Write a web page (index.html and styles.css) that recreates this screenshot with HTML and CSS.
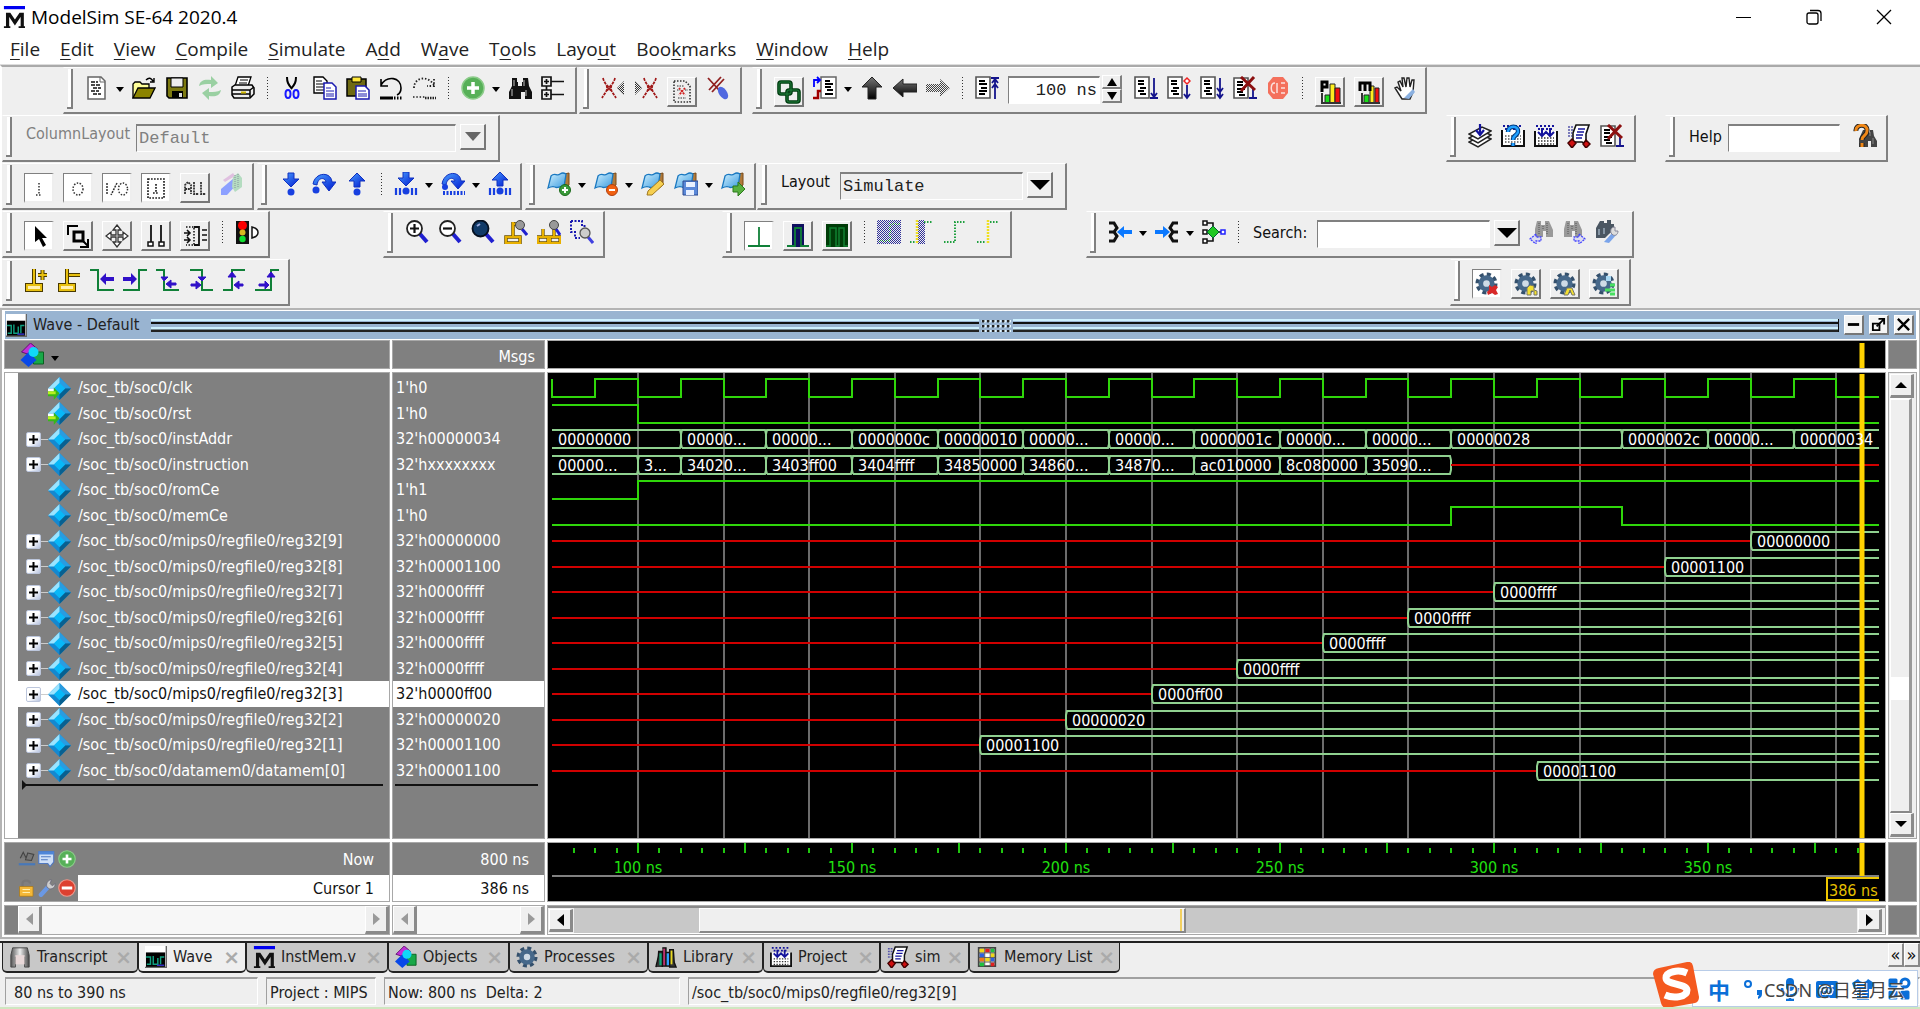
FILE: index.html
```html
<!DOCTYPE html>
<html lang="en">
<head>
<meta charset="utf-8">
<title>ModelSim SE-64 2020.4</title>
<link rel="stylesheet" href="styles.css">
</head>
<body>
<svg class="defs" aria-hidden="true">
<defs>
<pattern id="dots" width="2" height="2" patternUnits="userSpaceOnUse"><rect width="1" height="1" fill="#efefef"/><rect x="1" y="1" width="1" height="1" fill="#efefef"/></pattern>
<linearGradient id="g-blue" x2="1" y2="1"><stop offset="0" stop-color="#4aa0ff"/><stop offset="1" stop-color="#0018d0"/></linearGradient>
<linearGradient id="g-dark" x2="0" y2="1"><stop offset="0" stop-color="#777"/><stop offset="1" stop-color="#000"/></linearGradient>
<linearGradient id="g-book" x2="1" y2="1"><stop offset="0" stop-color="#d4f2ff"/><stop offset="1" stop-color="#3a9be0"/></linearGradient>
<linearGradient id="g-steel" x2="1"><stop offset="0" stop-color="#555"/><stop offset=".5" stop-color="#eee"/><stop offset="1" stop-color="#444"/></linearGradient>
</defs>
<symbol id="new" viewBox="0 0 24 24"><path d="M3 1h13l4 4v18H3z" fill="#fff" stroke="#666" stroke-width="1.5"/><path d="M15 1v5h5" fill="none" stroke="#666"/><path d="M6 6h7M6 9h9M8 12h8M6 15h8M8 18h8" stroke="#111" stroke-width="1.600" stroke-dasharray="4 1"/></symbol>
<symbol id="open" viewBox="0 0 24 24"><path d="M1 22V8l2-2h5l2 2h7v4" fill="#ffff9a" stroke="#000" stroke-width="1.3"/><path d="M1 22 6 12h17l-5 10z" fill="#8c8400" stroke="#000" stroke-width="1.3"/><path d="M14 4c3-3 5-2 7 1m1-3v4h-4" fill="none" stroke="#000" stroke-width="1.4"/></symbol>
<symbol id="save" viewBox="0 0 24 24"><path d="M2 2h20v20H4l-2-2z" fill="#7d7a10" stroke="#000" stroke-width="1.6"/><path d="M6 2h12v9H6z" fill="#eee" stroke="#000"/><path d="M7 15h11v7H7z" fill="#000"/><path d="M14 17h3v4h-3z" fill="#ddd"/></symbol>
<symbol id="reload" viewBox="0 0 24 24"><g fill="#9ad0a2"><path d="M1 10c1-6 6-7 12-6V0l7 7-7 5V8c-5 0-8 0-12 2z"/><path d="M23 14c-1 6-6 7-12 6v4l-7-7 7-5v4c5 0 8 0 12-2z"/></g></symbol>
<symbol id="print" viewBox="0 0 24 24"><path d="M7 1h13l-3 9H4z" fill="#fff" stroke="#000" stroke-width="1.3"/><path d="M9 4h8M8 7h8" stroke="#000"/><path d="m1 11 3-2h17l2 3v6l-4 4H3l-2-3z" fill="#eee" stroke="#000" stroke-width="1.5"/><path d="M1 14h18v7M1 18h18m0-4 4-3" fill="none" stroke="#000" stroke-width="1.5"/><path d="M10 15.500h5v2h-5z" fill="#d0b800"/></symbol>
<symbol id="cut" viewBox="0 0 24 24"><path d="M7 1c0 5 1 7 5 12M16 1c0 5-1 7-5 12" fill="none" stroke="#000" stroke-width="2"/><ellipse cx="8" cy="18" rx="2.500" ry="4" fill="none" stroke="#1818ff" stroke-width="2"/><ellipse cx="16" cy="18" rx="2.500" ry="4" fill="none" stroke="#1818ff" stroke-width="2"/></symbol>
<symbol id="copy" viewBox="0 0 24 24"><path d="M1 1h9l4 4v12H1z" fill="#fff" stroke="#000" stroke-width="1.4"/><path d="M3 5h6M3 8h8M3 11h8M3 14h8" stroke="#000"/><path d="M11 7h8l4 4v12H11z" fill="#fff" stroke="#1a1ab0" stroke-width="1.5"/><path d="M13 12h5M13 15h8M13 18h8M13 20h8" stroke="#1a1ab0"/></symbol>
<symbol id="paste" viewBox="0 0 24 24"><path d="M1 3h19v17H1z" fill="#6f6a12" stroke="#000" stroke-width="1.5"/><path d="M6 1h9v5H6z" fill="#ffe83a" stroke="#000"/><path d="M10 10h9l4 4v9H10z" fill="#fff" stroke="#1a1ab0" stroke-width="1.5"/><path d="M12 15h8M12 18h9M12 20h9" stroke="#1a1ab0"/></symbol>
<symbol id="undo" viewBox="0 0 24 24"><path d="M2 9c6-10 20-8 20 3 0 4-2 6-4 7M2 3v7h7" fill="none" stroke="#000" stroke-width="1.6"/><path d="M1 22h13" stroke="#000" stroke-width="3"/><path d="M15 22h9" stroke="#000" stroke-width="3" stroke-dasharray="1.500 1.500"/></symbol>
<symbol id="redo" viewBox="0 0 24 24"><path d="M22 9C16-1 2 1 2 12M22 3v7h-7" fill="none" stroke="#222" stroke-width="1.8" stroke-dasharray="1.500 1.800"/><path d="M1 21h13" stroke="#222" stroke-width="1.500" stroke-dasharray="1.500 1.800"/><path d="M13 22h11" stroke="#222" stroke-width="2.500" stroke-dasharray="1.500 1"/></symbol>
<symbol id="plus" viewBox="0 0 24 24"><circle cx="12" cy="12" r="11" fill="#57b058" stroke="#8ccc8a" stroke-width="1.500"/><path d="M12 6v12M6 12h12" stroke="#fff" stroke-width="3.500"/></symbol>
<symbol id="minus" viewBox="0 0 24 24"><circle cx="12" cy="12" r="11" fill="#dd4030" stroke="#f0988c" stroke-width="1.500"/><path d="M5 12h14" stroke="#fff" stroke-width="4"/></symbol>
<symbol id="find" viewBox="0 0 24 24"><path d="M4 2h5v4h1v4h4V6h1V2h5l1 8 3 6v7h-7v-7h-4v7H1v-7l3-6z" fill="#111"/><path d="M6 4v6M4 13v7M16 4v6M18 14v6" stroke="#888" stroke-width="1.500"/></symbol>
<symbol id="tree" viewBox="0 0 24 24"><g fill="none" stroke="#111" stroke-width="1.700"><path d="M1 1h9v9H1zM1 14h9v9H1zM10 5.500h13M10 18.500h13M5.500 10v4M5.500 3v5M3 5.500h5M5.500 16v5M3 18.500h5"/></g></symbol>
<symbol id="xl" viewBox="0 0 24 24"><path d="M2 2c1 5 4 6 4 10S3 18 1 22M14 2c-1 5-4 6-4 10s3 6 5 10M6 9l4 6M10 9l-4 6" fill="none" stroke="#a01818" stroke-width="1.700" stroke-dasharray="3 1"/><path d="M23 5v14l-7-7z" fill="#333"/><path d="M23 5v14l-7-7z" fill="url(#dots)"/></symbol>
<symbol id="xr" viewBox="0 0 24 24"><path d="M10 2c1 5 4 6 4 10s-3 6-5 10M22 2c-1 5-4 6-4 10s3 6 5 10M14 9l4 6M18 9l-4 6" fill="none" stroke="#a01818" stroke-width="1.700" stroke-dasharray="3 1"/><path d="M1 5v14l7-7z" fill="#333"/><path d="M1 5v14l7-7z" fill="url(#dots)"/></symbol>
<symbol id="xdoc" viewBox="0 0 24 24"><path d="M4 1h11l5 5v16H4z" fill="#eee" stroke="#333" stroke-width="1.600" stroke-dasharray="1.500 1.500"/><path d="M7 6h7M8 18h8M7 10h3M15 10h3" stroke="#333" stroke-dasharray="1.500 1"/><path d="m9 8 6 7m0-7-6 7" stroke="#d02020" stroke-width="1.800" stroke-dasharray="2 1"/></symbol>
<symbol id="xpen" viewBox="0 0 24 24"><path d="m2 2 11 12M15 1 3 14M18 3 6 16" stroke="#902020" stroke-width="1.800"/><ellipse cx="17" cy="17" rx="4" ry="7" transform="rotate(-35 17 17)" fill="#5068e0"/></symbol>
<symbol id="link" viewBox="0 0 24 24"><g fill="none" stroke="#003c10" stroke-width="3.600"><rect x="2" y="2" width="12" height="12" rx="2"/><rect x="10" y="10" width="12" height="12" rx="2"/></g><g fill="none" stroke="#20803c"><rect x="2" y="2" width="12" height="12" rx="2"/><rect x="10" y="10" width="12" height="12" rx="2"/></g></symbol>
<symbol id="restart" viewBox="0 0 24 24"><path d="M8 1h15v21H8z" fill="#fff" stroke="#666" stroke-width="1.500"/><path d="M12 5h5M12 8h8M12 11h6M14 14h6M12 18h8" stroke="#000" stroke-width="1.800"/><path d="M1 11V4h5M4 1l3 3-3 3" fill="none" stroke="#00f" stroke-width="1.800"/><path d="M0 22h5v-7h3" fill="none" stroke="#a00000" stroke-width="2.500"/></symbol>
<symbol id="up" viewBox="0 0 24 24"><path d="m12 1 10 10h-6v12H8V11H2z" fill="url(#g-dark)" stroke="#222"/></symbol>
<symbol id="left" viewBox="0 0 24 24"><path d="M0 12 10 3v5h14v8H10v5z" fill="url(#g-dark)" stroke="#222"/></symbol>
<symbol id="right" viewBox="0 0 24 24"><path d="M24 12 14 3v5H0v8h14v5z" fill="#444"/><rect width="24" height="24" fill="url(#dots)"/></symbol>
<symbol id="runup" viewBox="0 0 24 24"><path d="M1 1h14v21H1z" fill="#fff" stroke="#555" stroke-width="1.600"/><path d="M4 5h6M4 8h8M6 12h6M4 15h8M4 18h6" stroke="#000" stroke-width="1.800"/><path d="M20 23V2M16 2h8M17 7l3-4 3 4M17 12l3-4 3 4" fill="none" stroke="#14148c" stroke-width="1.800"/></symbol>
<symbol id="run1" viewBox="0 0 24 24"><path d="M1 1h14v21H1z" fill="#fff" stroke="#555" stroke-width="1.600"/><path d="M4 5h6M4 8h6M6 12h6M4 15h6M6 18h6" stroke="#000" stroke-width="1.800"/><path d="M20 2v20M16 22h8M17 17l3 4 3-4" fill="none" stroke="#14148c" stroke-width="1.800"/></symbol>
<symbol id="run2" viewBox="0 0 24 24"><path d="M1 1h14v21H1z" fill="#fff" stroke="#555" stroke-width="1.600"/><path d="M4 5h6M4 8h6M6 12h6M4 15h6M6 18h6" stroke="#000" stroke-width="1.800"/><path d="M20 9v13M17 18l3 4 3-4" fill="none" stroke="#14148c" stroke-width="1.800"/><path d="m20 2 3 3-3 3-3-3z" fill="#fff" stroke="#e22" stroke-width="1.500"/></symbol>
<symbol id="run3" viewBox="0 0 24 24"><path d="M1 1h14v21H1z" fill="#fff" stroke="#555" stroke-width="1.600"/><path d="M4 5h6M4 8h6M6 12h6M4 15h6M6 18h6" stroke="#000" stroke-width="1.800"/><path d="M20 2v20M17 18l3 4 3-4M17 12l3 4 3-4" fill="none" stroke="#14148c" stroke-width="1.800"/></symbol>
<symbol id="runx" viewBox="0 0 24 24"><path d="M1 2h14v20H1z" fill="#fff" stroke="#555" stroke-width="1.600"/><path d="M4 6h6M4 9h6M4 13h8M4 16h6M6 19h6" stroke="#000" stroke-width="1.800"/><path d="M20 12v10M16 22h8" stroke="#14148c" stroke-width="1.800"/><path d="m8 1 14 13M21 1 8 15" stroke="#8c1010" stroke-width="3"/></symbol>
<symbol id="stop" viewBox="0 0 24 24"><path d="M7 1h10l5 6v10l-5 6H7l-5-6V7z" fill="#f4705c"/><path d="M9 7c-5 0-5 10 0 10M11 7v10M15 12h4M15 7h4M15 17h4" stroke="#fbe0dc" stroke-width="1.500" fill="none"/></symbol>
<symbol id="perfp" viewBox="0 0 24 24"><path d="M4 12V2h5v5H4" fill="none" stroke="#000" stroke-width="3"/><path d="M7 15h5v8H7z" fill="#18e018" stroke="#222"/><path d="M12 4h5v19h-5z" fill="#ffee20" stroke="#222"/><path d="M17 8h5v15h-5z" fill="#f01010" stroke="#222"/><path d="M4 13v10h19" fill="none" stroke="#333" stroke-width="2"/></symbol>
<symbol id="perfm" viewBox="0 0 24 24"><path d="M7 15h5v8H7z" fill="#18e018" stroke="#222"/><path d="M13 6h4v17h-4z" fill="#ffee20" stroke="#222"/><path d="M18 8h4v15h-4z" fill="#f01010" stroke="#222"/><path d="M3 11V3h10v8M8 3v8" fill="none" stroke="#000" stroke-width="3"/><path d="M5 13v10h18" fill="none" stroke="#333" stroke-width="2"/></symbol>
<symbol id="hand" viewBox="0 0 24 24"><path d="m2 12 2-1 4 4-3-9 2-1 3 6-1-9h2l2 9 1-9h2l1 9 2-7h2l-1 12-3 7H9z" fill="#fff" stroke="#222" stroke-width="1.400"/><path d="m11 22 9-9 2 3-6 7z" fill="#8ab0e0"/></symbol>
<symbol id="comp" viewBox="0 0 24 24"><g fill="#fff" stroke="#222" stroke-width="1.500"><path d="m1 18 9 5 13-8-9-4z"/><path d="m1 14 9 5 13-8-9-4z"/><path d="m1 10 9 5 13-8-9-4z"/></g><path d="M12 0v10M8 6l4 5 4-5" fill="none" stroke="#14149c" stroke-width="2.200"/></symbol>
<symbol id="calq" viewBox="0 0 24 24"><path d="M1 6v16h22V6" fill="#fff" stroke="#111" stroke-width="2"/><path d="M4 12h16M4 15h16M4 18h16" stroke="#555" stroke-width="1.500" stroke-dasharray="1.500 1.500"/><path d="M2 2h20M4 5h16" stroke="#14149c" stroke-width="2" stroke-dasharray="2 2"/><path d="M7 8c0-7 11-7 10 0-1 4-5 3-5 8M12 19v3" fill="none" stroke="#003c80" stroke-width="4.500"/><path d="M7 8c0-7 11-7 10 0-1 4-5 3-5 8M12 19v3" fill="none" stroke="#22a0ff" stroke-width="2.500"/></symbol>
<symbol id="cal" viewBox="0 0 24 24"><path d="M1 7v15h22V7" fill="#fff" stroke="#111" stroke-width="2"/><path d="M4 14h16M4 17h16M4 20h16" stroke="#333" stroke-width="1.500" stroke-dasharray="1.500 1.500"/><path d="M2 2h20M4 5h16" stroke="#14149c" stroke-width="2" stroke-dasharray="2 2"/><path d="M8 4v7M16 4v7M4 8l4 4 4-4 4 4 4-4" fill="none" stroke="#14149c" stroke-width="2"/></symbol>
<symbol id="sim" viewBox="0 0 24 24"><path d="M9 1h13l-3 9v10l-4-2H6V9z" fill="#fff" stroke="#111" stroke-width="1.600"/><path d="M11 5h7M10 8h7M9 11h7M9 14h6" stroke="#14149c" stroke-width="1.500"/><path d="M1 3h6M1 6h5M1 9h4M1 12h4" stroke="#55a" stroke-width="1.400" stroke-dasharray="2 1"/><path d="m5 15 4 4-4 5-4-5zM19 16l4 4-4 4-3-4z" fill="#d01010" stroke="#400" stroke-width="1.500"/></symbol>
<symbol id="helpf" viewBox="0 0 24 24"><path d="M10 6h5v3h2V6h3l1 6 3 5v6h-6v-6h-3v6H6v-8z" fill="#444"/><path d="M17 8v4M20 14v6" stroke="#888"/><path d="M3 7c-1-7 12-8 11 0 0 5-5 4-5 9M9 19v4" fill="none" stroke="#222" stroke-width="5"/><path d="M3 7c-1-7 12-8 11 0 0 5-5 4-5 9M9 19v4" fill="none" stroke="#f08818" stroke-width="3"/></symbol>
<symbol id="fi" viewBox="0 0 24 24"><path d="M12 7v12M9 19h6" stroke="#333" stroke-width="1.500" stroke-dasharray="1.500 1.500"/></symbol>
<symbol id="fo" viewBox="0 0 24 24"><ellipse cx="12" cy="13" rx="5" ry="6" fill="none" stroke="#333" stroke-width="1.500" stroke-dasharray="1.500 1.500"/></symbol>
<symbol id="fio" viewBox="0 0 24 24"><path d="M2 7v12M12 7 6 19" stroke="#333" stroke-width="1.500" stroke-dasharray="2 1"/><ellipse cx="18" cy="13" rx="4.500" ry="6" fill="none" stroke="#333" stroke-width="1.500" stroke-dasharray="1.500 1.500"/></symbol>
<symbol id="fint" viewBox="0 0 24 24"><path d="M4 3h16v19H4zM12 8v9M9 17h6" fill="none" stroke="#222" stroke-width="1.700" stroke-dasharray="1.700 1.300"/></symbol>
<symbol id="fall" viewBox="0 0 24 24"><path d="M2 18V9l3-3 3 3v9M2 13h6M11 6v12h5M18 6v12h5" fill="none" stroke="#333" stroke-width="1.800" stroke-dasharray="2 .8"/></symbol>
<symbol id="wand" viewBox="0 0 24 24"><path d="M4 8 14 1l2 3L6 10z" fill="#e0c0e0"/><path d="M2 17 15 6l5 4L8 23H2z" fill="#8ca0ff"/><path d="m14 5 5-4 4 5v9l-7 5-3-5z" fill="#b4dcc0"/><path d="M16 3v14M19 2v14" stroke="#8890a0" stroke-dasharray="1 1"/></symbol>
<symbol id="into" viewBox="0 0 24 24"><path d="M9 1h6v6h5l-8 8-8-8h5z" fill="url(#g-blue)" stroke="#1030c0"/><circle cx="12" cy="20" r="3.500" fill="#1840e0"/></symbol>
<symbol id="over" viewBox="0 0 24 24"><path d="M1 12C3 0 19-1 20 10h4l-7 9-7-9h4c-1-5-8-5-9 3z" fill="url(#g-blue)" stroke="#1030c0"/><circle cx="4" cy="18" r="3.500" fill="#1840e0"/></symbol>
<symbol id="out" viewBox="0 0 24 24"><path d="m12 1 8 8h-5v6H9V9H4z" fill="url(#g-blue)" stroke="#1030c0"/><circle cx="12" cy="20" r="3.500" fill="#1840e0"/></symbol>
<symbol id="intoc" viewBox="0 0 24 24"><path d="M9 0h6v6h5l-8 8-8-8h5z" fill="url(#g-blue)" stroke="#1030c0"/><circle cx="12" cy="19" r="3.500" fill="#1840e0"/><path d="M2 16v7M6 16v7M18 16v7M22 16v7" stroke="#1840e0" stroke-width="2.200"/></symbol>
<symbol id="overc" viewBox="0 0 24 24"><path d="M1 12C3-1 19-2 20 9h4l-7 8-7-8h4c-1-4-8-4-9 4z" fill="url(#g-blue)" stroke="#1030c0"/><circle cx="4" cy="15" r="3" fill="#1840e0"/><path d="M2 21h22" stroke="#1840e0" stroke-width="4" stroke-dasharray="2 1.500"/></symbol>
<symbol id="outc" viewBox="0 0 24 24"><path d="m12 0 8 8h-5v6H9V8H4z" fill="url(#g-blue)" stroke="#1030c0"/><circle cx="12" cy="19" r="3.500" fill="#1840e0"/><path d="M2 16v7M6 16v7M18 16v7M22 16v7" stroke="#1840e0" stroke-width="2.200"/></symbol>
<symbol id="book" viewBox="0 0 24 24"><path d="m17 2 5-1v12l-5 4z" fill="#b07a3a" stroke="#7a4a18"/><path d="M4 4c4-4 6 1 9-2 3-2 4-1 6 0l-2 13c-4-2-6 2-9 0-2-1-5 0-7 1z" fill="url(#g-book)" stroke="#1a78c0" stroke-width="1.300"/></symbol>
<symbol id="bkadd" viewBox="0 0 24 24"><use href="#book" width="24" height="24"/><circle cx="18" cy="18" r="5.500" fill="#3a9a3a" stroke="#1a6a1a"/><path d="M18 15v6M15 18h6" stroke="#fff" stroke-width="2"/></symbol>
<symbol id="bkdel" viewBox="0 0 24 24"><use href="#book" width="24" height="24"/><circle cx="18" cy="18" r="5.500" fill="#f06010" stroke="#b04010"/><path d="M15 18h6" stroke="#fff" stroke-width="2"/></symbol>
<symbol id="bkedit" viewBox="0 0 24 24"><use href="#book" width="24" height="24"/><path d="m7 19 12-11 4 4-12 11H6z" fill="#f6cf50" stroke="#a07820"/></symbol>
<symbol id="bksave" viewBox="0 0 24 24"><use href="#book" width="24" height="24"/><path d="M9 9h15v14H9z" fill="#5a88d8" stroke="#2a4890"/><path d="M12 10h9v5h-9zM12 18h8v5h-8z" fill="#e8f0ff"/></symbol>
<symbol id="bkgo" viewBox="0 0 24 24"><use href="#book" width="24" height="24"/><path d="M12 14h5v-4l7 7-7 7v-4h-5z" fill="#58b040" stroke="#2a7a1a"/></symbol>
<symbol id="arrow" viewBox="0 0 24 24"><path d="M8 2v16l4-3 4 8 3-2-4-7h5z" fill="#000"/></symbol>
<symbol id="zoomm" viewBox="0 0 24 24"><path d="M2 11V2h10" fill="none" stroke="#000" stroke-width="2"/><path d="M8 8h9v9H8z" fill="none" stroke="#000" stroke-width="3"/><path d="m16 16 6 6M22 15v8h-8" fill="none" stroke="#000" stroke-width="2"/></symbol>
<symbol id="pan" viewBox="0 0 24 24"><path d="m12 1 4 5h-3v5h5V8l5 4-5 4v-3h-5v5h3l-4 5-4-5h3v-5H6v3l-5-4 5-4v3h5V6H8z" fill="#fff" stroke="#333" stroke-width="1.300"/></symbol>
<symbol id="curs2" viewBox="0 0 24 24"><path d="M7 1v17M17 1v17" stroke="#111" stroke-width="1.800"/><path d="M4 18h5v4H4zM15 18h5v4h-5z" fill="#fff" stroke="#111" stroke-width="1.500"/></symbol>
<symbol id="edge" viewBox="0 0 24 24"><path d="M11 3h5v18h-5" fill="none" stroke="#111" stroke-width="1.800"/><path d="M3 3h8v18H3" fill="none" stroke="#111" stroke-dasharray="1.500 1.500" stroke-width="1.500"/><path d="M1 9h6M4 6l3 3-3 3M1 16h6M4 13l3 3-3 3M24 6h-5M24 11h-5M24 16h-5" fill="none" stroke="#111" stroke-width="1.600"/></symbol>
<symbol id="light" viewBox="0 0 24 24"><path d="M1 1h13v23H1z" fill="#111"/><circle cx="7.500" cy="5.500" r="4.500" fill="#f00"/><circle cx="7.500" cy="12.500" r="3" fill="#d8b820"/><circle cx="7.500" cy="19" r="3.200" fill="#10e030"/><path d="M17 7c8 2 8 9 0 11z" fill="#fff" stroke="#111" stroke-width="1.500"/></symbol>
<symbol id="zin" viewBox="0 0 24 24"><path d="m15 14 7 8" stroke="#2020d0" stroke-width="4"/><circle cx="9.500" cy="8.500" r="7.500" fill="#fff" stroke="#222" stroke-width="1.800"/><path d="M5 8.500h9M9.500 4v9" stroke="#111" stroke-width="2.200"/></symbol>
<symbol id="zout" viewBox="0 0 24 24"><path d="m15 14 7 8" stroke="#2020d0" stroke-width="4"/><circle cx="9.500" cy="8.500" r="7.500" fill="#fff" stroke="#222" stroke-width="1.800"/><path d="M5 8.500h9" stroke="#111" stroke-width="2.200"/></symbol>
<symbol id="zfull" viewBox="0 0 24 24"><path d="m15 14 7 8" stroke="#2020d0" stroke-width="4"/><circle cx="9.500" cy="8.500" r="8" fill="#103a68" stroke="#051020" stroke-width="1.800"/><path d="M6 6l3-2" stroke="#9ad" stroke-width="2"/></symbol>
<symbol id="zcur" viewBox="0 0 24 24"><path d="M9 2v15M2 17h14v6H2zM9 4h5" fill="none" stroke="#6a5000" stroke-width="3.500"/><path d="M9 2v15M2 17h14v6H2zM9 4h5" fill="none" stroke="#e8b000" stroke-width="2.200"/><path d="m18 9 5 6" stroke="#2020d0" stroke-width="3"/><circle cx="16" cy="5" r="4.500" fill="#999" stroke="#444"/></symbol>
<symbol id="zcur2" viewBox="0 0 24 24"><path d="M6 9v9M1 17h10v6H1zM17 8v9M13 17h10v6H13z" fill="none" stroke="#6a5000" stroke-width="3.300"/><path d="M6 9v9M1 17h10v6H1zM17 8v9M13 17h10v6H13z" fill="none" stroke="#e8b000" stroke-width="2"/><path d="m19 9 4 6" stroke="#2020d0" stroke-width="3"/><circle cx="17" cy="5" r="4.500" fill="#999" stroke="#444"/></symbol>
<symbol id="zsel" viewBox="0 0 24 24"><path d="M1 1h11v5h4M1 1v11h4v6h5" fill="none" stroke="#1818b0" stroke-width="2" stroke-dasharray="2 1.500"/><path d="m18 17 5 6" stroke="#4040e0" stroke-width="3"/><circle cx="15" cy="13" r="5" fill="#ccc" stroke="#555" stroke-width="1.300"/></symbol>
<symbol id="w1" viewBox="0 0 24 24"><path d="M12 3v19M1 22h22" stroke="#108038" stroke-width="1.800"/></symbol>
<symbol id="w2" viewBox="0 0 24 24"><path d="M6 0h12v23H6z" fill="#101060"/><path d="M1 22h8V4h6v18h8" fill="none" stroke="#108038" stroke-width="1.800"/></symbol>
<symbol id="w3" viewBox="0 0 24 24"><path d="M1 0h22v23H1z" fill="#003c08"/><path d="M1 22h4V4h6v18h3V4h5v18h4" fill="none" stroke="#108030" stroke-width="1.500"/></symbol>
<symbol id="w4" viewBox="0 0 24 24"><path d="M0 0h24v24H0z" fill="#303098"/><path d="M2 21h11V4h10" fill="none" stroke="#108038" stroke-width="2" stroke-dasharray="2 1"/><rect width="24" height="24" fill="url(#dots)"/></symbol>
<symbol id="w5" viewBox="0 0 24 24"><path d="M8 0h7v24H8z" fill="#303098"/><rect width="24" height="24" fill="url(#dots)"/><path d="M7 0v24" stroke="#f0e020" stroke-width="2.500" stroke-dasharray="2 1"/><path d="M0 22h6M14 2h9" stroke="#20a040" stroke-width="2" stroke-dasharray="1.500 1.500"/></symbol>
<symbol id="w6" viewBox="0 0 24 24"><path d="M1 22h11V2h11" fill="none" stroke="#20a040" stroke-width="2" stroke-dasharray="1.500 1.500"/></symbol>
<symbol id="w7" viewBox="0 0 24 24"><path d="M1 22h9M14 2h9" stroke="#20a040" stroke-width="2" stroke-dasharray="1.500 1.500"/><path d="M12 0v24" stroke="#f0e020" stroke-width="2.500" stroke-dasharray="2 1"/></symbol>
<symbol id="brl" viewBox="0 0 24 24"><path d="M1 3h5l3 5-3 4H1M6 12l3 4-3 5H1" fill="none" stroke="#111" stroke-width="3"/><path d="m9 12 7-6v4h8v4h-8v4z" fill="#0a78ff"/></symbol>
<symbol id="brr" viewBox="0 0 24 24"><path d="M23 3h-5l-3 5 3 4h5M18 12l-3 4 3 5h5" fill="none" stroke="#111" stroke-width="3"/><path d="M15 12 8 6v4H0v4h8v4z" fill="#0a78ff"/></symbol>
<symbol id="net" viewBox="0 0 24 24"><path d="M3 3h8v18H3M1 12h20" fill="none" stroke="#111" stroke-width="1.600"/><path d="M1 1h4v4H1zM1 10h4v4H1zM1 19h4v4H1z" fill="#fff" stroke="#111" stroke-width="1.500"/><path d="m11 6 6 6-6 6-6-6z" fill="#20c820" stroke="#063"/><path d="M19 10h4v4h-4z" fill="#fff" stroke="#22f" stroke-width="1.500"/></symbol>
<symbol id="sprev" viewBox="0 0 24 24"><path d="M8 1h4v4h4V1h4l4 9v7h-7v-6h-3v6H6V9z" fill="#999"/><path d="M10 3v12M18 3v12M14 6v4" stroke="#555" stroke-dasharray="1 1"/><path d="m7 14-6 5 6 5v-3h5v-4H7z" fill="#dde" stroke="#44f" stroke-width="1.300" stroke-dasharray="2 1"/></symbol>
<symbol id="snext" viewBox="0 0 24 24"><path d="M4 1h4v4h4V1h4l4 9v7h-7v-6h-3v6H2V9z" fill="#999"/><path d="M6 3v12M14 3v12M10 6v4" stroke="#555" stroke-dasharray="1 1"/><path d="m17 14 6 5-6 5v-3h-5v-4h5z" fill="#dde" stroke="#44f" stroke-width="1.300" stroke-dasharray="2 1"/></symbol>
<symbol id="sopt" viewBox="0 0 24 24"><path d="M5 1h4v2h3V0h4v4h3v6l-5 4-4 4H1V8z" fill="#4a5662"/><path d="M4 9v6M9 8v6" stroke="#9ab" stroke-width="1.500"/><path d="m9 22 9-10 4 2-8 9z" fill="#7aa4ea"/><path d="M16 13c-1-4 1-6 4-6v4h3c0 4-3 5-5 4z" fill="#ddd" stroke="#889"/></symbol>
<symbol id="cadd" viewBox="0 0 24 24"><path d="M10 1v16M3 17h14v5H3zM14 7h9M18.500 2v10" fill="none" stroke="#4a3a00" stroke-width="4"/><path d="M10 1v16M3 17h14v5H3zM14 7h9M18.500 2v10" fill="#fff0b0" stroke="#e8c010" stroke-width="2"/></symbol>
<symbol id="cdel" viewBox="0 0 24 24"><path d="M10 1v16M3 17h14v5H3zM12 7h11" fill="none" stroke="#4a3a00" stroke-width="4"/><path d="M10 1v16M3 17h14v5H3zM12 7h11" fill="#fff0b0" stroke="#e8c010" stroke-width="2"/></symbol>
<symbol id="e1" viewBox="0 0 24 24"><path d="M0 2h8v20h16" fill="none" stroke="#108038" stroke-width="2"/><path d="m10 11 6-6v4h8v4h-8v4z" fill="#3010c8"/></symbol>
<symbol id="e2" viewBox="0 0 24 24"><path d="M0 22h16V2h8" fill="none" stroke="#108038" stroke-width="2"/><path d="M14 11 8 5v4H0v4h8v4z" fill="#3010c8"/></symbol>
<symbol id="e3" viewBox="0 0 24 24"><path d="M0 2h8v20h15" fill="none" stroke="#108038" stroke-width="2"/><path d="m5 9 3 4 4-4zM10 16l5-4v8zM14 15h6v2h-6z" fill="#3010c8" stroke="#3010c8"/></symbol>
<symbol id="e4" viewBox="0 0 24 24"><path d="M1 2h12v20h11" fill="none" stroke="#108038" stroke-width="2"/><path d="m9 9 4 4 4-4zM12 17l-5-4v8zM2 16h5v2H2z" fill="#3010c8" stroke="#3010c8"/></symbol>
<symbol id="e5" viewBox="0 0 24 24"><path d="M1 22h9V2h13" fill="none" stroke="#108038" stroke-width="2"/><path d="m6 9 4-5 4 5zM12 17l5-4v8zM15 16h6v2h-6z" fill="#3010c8" stroke="#3010c8"/></symbol>
<symbol id="e6" viewBox="0 0 24 24"><path d="M0 22h16V2h8" fill="none" stroke="#108038" stroke-width="2"/><path d="m12 9 4-5 4 5zM14 17l-4-4v8zM4 16h6v2H4z" fill="#3010c8" stroke="#3010c8"/></symbol>
<symbol id="gear" viewBox="0 0 24 24"><circle cx="12" cy="12" r="9.500" fill="none" stroke="#34506c" stroke-width="4" stroke-dasharray="4.200 3.260"/><circle cx="12" cy="12" r="6" fill="#cfdbe6" stroke="#46688a" stroke-width="5"/></symbol>
<symbol id="g1" viewBox="0 0 24 24"><use href="#gear" width="23" height="23"/><path d="m14 13 3 2 3-2 3 2-2 3 2 4-3 1-3-2-4 2-1-3 2-2z" fill="#d82828"/></symbol>
<symbol id="g2" viewBox="0 0 24 24"><use href="#gear" width="23" height="23"/><path d="M13 23v-7l3-3 4 1v4l3 1v4h-3v-4h-3v4z" fill="#f4e030" stroke="#776"/></symbol>
<symbol id="g3" viewBox="0 0 24 24"><use href="#gear" width="23" height="23"/><path d="m11 23 3-7h5l3 7h-3l-2-5-2 5z" fill="#f4e030" stroke="#776"/></symbol>
<symbol id="g4" viewBox="0 0 24 24"><use href="#gear" width="23" height="23"/><path d="M14 4h5v5h-5z" fill="#a8d8f4"/><path d="M18 13h5M13 18h10M18 22h5" stroke="#48e060" stroke-width="3"/></symbol>
<symbol id="wavei" viewBox="0 0 24 24"><path d="M0 0h24v24H0z" fill="#fff"/><path d="M1 7h21v16H1z" fill="#000"/><path d="M1 12h5v8H2M9 11v9h5v-7M17 20v-8h4" fill="none" stroke="#10a080" stroke-width="1.600"/><path d="M13 21h8" stroke="#33c" stroke-width="1.500"/><path d="M0 23.500h23.500V0" fill="none" stroke="#666" stroke-width="2"/></symbol>
<symbol id="mlogo" viewBox="0 0 24 24"><path d="M1 0h23v3.500H1z" fill="#0000f0"/><path d="M5 23V9h2l6 9 6-9h2v14" fill="none" stroke="#111" stroke-width="3.500"/><path d="M1 23h7M17 23h7" stroke="#111" stroke-width="2"/></symbol>
<symbol id="objs" viewBox="0 0 24 24"><path d="m1 9 9-9 7 6-7 6z" fill="#c030d8" stroke="#601070"/><path d="M13 9h10v12H13z" fill="#18a848" stroke="#0a6020"/><path d="m8 9 8 8-8 7-8-7z" fill="#0848e8"/><circle cx="13" cy="9" r="5" fill="#10d8f8"/></symbol>
<symbol id="trans" viewBox="0 0 24 24"><path d="M2 23V10l2-8h16l2 8v13h-5V12H7v11z" fill="url(#g-steel)" stroke="#444"/><path d="M7 10h10v10H7z" fill="#e8d8d8"/></symbol>
<symbol id="lib" viewBox="0 0 24 24"><path d="M1 23c1-7 3-8 3-17h4v17M8 2h4v20H8M12 7h4v15h-4M16 4h4l1 14 2 5h-7z" fill="#333" stroke="#111" stroke-width="1.500"/><path d="M6 8v13" stroke="#10a878" stroke-width="2.500"/><path d="M10 3v18" stroke="#c03070" stroke-width="2"/><path d="M14 8v13" stroke="#30a0ff" stroke-width="2.500"/><path d="M18 5v15" stroke="#e8d820" stroke-width="2"/></symbol>
<symbol id="mem" viewBox="0 0 24 24"><path d="M3 2h18v20H3z" fill="#fff" stroke="#444" stroke-width="2"/><path d="M4 3h5v4H4zM16 8h4v4h-4zM10 13h5v4h-5z" fill="#f0d818"/><path d="M10 3h5v4h-5zM16 18h4v4h-4z" fill="#e02020"/><path d="M16 3h4v4h-4zM4 18h5v4H4z" fill="#20c040"/><path d="M4 8h5v4H4zM16 13h4v4h-4z" fill="#3060e0"/><path d="M4 13h5v4H4z" fill="#f07818"/><path d="M3 7.500h18M3 12.500h18M3 17.500h18M9.500 2v20M15.500 2v20" stroke="#555"/></symbol>
<symbol id="gem" viewBox="0 0 24 24"><path d="m12 0 12 12-12 12L0 12z" fill="#1488d0"/><path d="m12 0 12 12h-7l-5-5z" fill="#2a9ce0"/><path d="M12 0 0 12h7l5-5z" fill="#9ae4ff"/><path d="M24 12 12 24v-7l5-5z" fill="#086090"/><path d="m12 6 6 6-6 6-6-6z" fill="#08b8f8"/></symbol>
<symbol id="gemin" viewBox="0 0 24 24"><use href="#gem" width="24" height="24"/><path d="M0 14h6v-3l6 6-6 7v-4H0z" fill="#38b818"/><path d="M0 12h6v3H0z" fill="#fff"/><path d="M0 15h8v3H0z" fill="#b8f020"/></symbol>
<symbol id="camera" viewBox="0 0 24 24"><path d="m3 11 4-8 4 8M13 4l8 2-3 8-8-1z" fill="#777" stroke="#444" stroke-width="1.500"/><path d="M1 19h22" stroke="#4878b8" stroke-width="3"/></symbol>
<symbol id="note" viewBox="0 0 24 24"><path d="M1 2h20v14l-5 6-3-4H1z" fill="#cfe0f8" stroke="#5078c0" stroke-width="1.500"/><path d="M1 2h20v4H1z" fill="#4f86d8"/><path d="M4 9h13M4 13h9" stroke="#5078c0" stroke-width="1.500"/></symbol>
<symbol id="lock" viewBox="0 0 24 24"><path d="M6 11V6c0-5 10-5 10 0" fill="none" stroke="#777" stroke-width="3"/><path d="M2 10h18v13H2z" fill="#f4b838" stroke="#a87818"/><path d="M6 14h10M6 18h10" stroke="#fff0b0" stroke-width="1.500"/></symbol>
<symbol id="wrench" viewBox="0 0 24 24"><path d="m4 21 10-11" stroke="#6a98e4" stroke-width="6" stroke-linecap="round"/><path d="M12 11c-2-6 2-10 6-10l-2 5 3 3 4-3c0 6-5 8-8 7z" fill="#ccc" stroke="#667"/></symbol>
</svg>

<header class="titlebar">
  <svg class="applogo"><use href="#mlogo"/></svg>
  <h1>ModelSim SE-64 2020.4</h1>
  <div class="winctl">
    <button aria-label="Minimize"><svg viewBox="0 0 16 16"><path d="M0 8.500h15" stroke="#000"/></svg></button>
    <button aria-label="Restore"><svg viewBox="0 0 16 16"><g fill="none" stroke="#000" stroke-width="1.300"><rect x="1" y="4" width="11" height="11" rx="2"/><path d="M4 1.500h8c2 0 3 1 3 3V12"/></g></svg></button>
    <button aria-label="Close"><svg viewBox="0 0 16 16"><path d="m1 1 14 14M15 1 1 15" stroke="#000" stroke-width="1.300"/></svg></button>
  </div>
</header>
<nav class="menubar">
  <button><u>F</u>ile</button><button><u>E</u>dit</button><button><u>V</u>iew</button><button><u>C</u>ompile</button><button><u>S</u>imulate</button><button>A<u>d</u>d</button><button>W<u>a</u>ve</button><button>T<u>o</u>ols</button><button>Layo<u>u</u>t</button><button>Boo<u>k</u>marks</button><button><u>W</u>indow</button><button><u>H</u>elp</button>
</nav>

<section class="toolbars" aria-label="Toolbars">
  <div class="row row1">
    <div class="tb c2">
      <button class="ic" aria-label="New"><svg><use href="#new"/></svg></button><button class="dd" aria-label="New menu"></button>
      <button class="ic" aria-label="Open"><svg><use href="#open"/></svg></button>
      <button class="ic" aria-label="Save"><svg><use href="#save"/></svg></button>
      <button class="ic" aria-label="Reload"><svg><use href="#reload"/></svg></button>
      <button class="ic" aria-label="Print"><svg><use href="#print"/></svg></button><i class="sep"></i>
      <button class="ic" aria-label="Cut"><svg><use href="#cut"/></svg></button>
      <button class="ic" aria-label="Copy"><svg><use href="#copy"/></svg></button>
      <button class="ic" aria-label="Paste"><svg><use href="#paste"/></svg></button>
      <button class="ic" aria-label="Undo"><svg><use href="#undo"/></svg></button>
      <button class="ic" aria-label="Redo"><svg><use href="#redo"/></svg></button><i class="sep"></i>
      <button class="ic" aria-label="Add"><svg><use href="#plus"/></svg></button><button class="dd" aria-label="Add menu"></button>
      <button class="ic" aria-label="Find"><svg><use href="#find"/></svg></button>
      <button class="ic" aria-label="Collapse"><svg><use href="#tree"/></svg></button>
    </div>
    <div class="tb c4">
      <button class="ic" aria-label="Previous exclusion"><svg><use href="#xl"/></svg></button>
      <button class="ic" aria-label="Next exclusion"><svg><use href="#xr"/></svg></button>
      <button class="bt" aria-label="Exclusion report"><svg><use href="#xdoc"/></svg></button>
      <button class="ic" aria-label="Edit exclusion"><svg><use href="#xpen"/></svg></button>
    </div>
    <div class="tb c6">
      <button class="bt" aria-label="Link"><svg><use href="#link"/></svg></button>
      <button class="ic" aria-label="Restart"><svg><use href="#restart"/></svg></button><button class="dd" aria-label="Restart menu"></button>
      <button class="ic" aria-label="Up"><svg><use href="#up"/></svg></button>
      <button class="ic" aria-label="Back"><svg><use href="#left"/></svg></button>
      <button class="ic" aria-label="Forward"><svg><use href="#right"/></svg></button><i class="sep"></i>
      <button class="ic" aria-label="Restart simulation"><svg><use href="#runup"/></svg></button>
      <input class="field runlen" aria-label="Run length" value="100 ns">
      <span class="spin"><button aria-label="Increase"></button><button aria-label="Decrease"></button></span>
      <button class="ic" aria-label="Run"><svg><use href="#run1"/></svg></button>
      <button class="ic" aria-label="Continue run"><svg><use href="#run2"/></svg></button>
      <button class="ic" aria-label="Run all"><svg><use href="#run3"/></svg></button>
      <button class="ic" aria-label="Break"><svg><use href="#runx"/></svg></button>
      <button class="ic" aria-label="Stop"><svg><use href="#stop"/></svg></button><i class="sep"></i>
      <button class="bt" aria-label="Performance"><svg><use href="#perfp"/></svg></button>
      <button class="bt" aria-label="Memory"><svg><use href="#perfm"/></svg></button>
      <button class="ic" aria-label="Edit mode"><svg><use href="#hand"/></svg></button>
    </div>
  </div>
  <div class="row row2">
    <div class="tb c2">
      <label class="lb off" for="collayout">ColumnLayout</label>
      <input class="field flat grow off" id="collayout" value="Default" disabled>
      <button class="drop dim" aria-label="Open column layouts"></button>
    </div>
    <div class="tb c4">
      <button class="ic" aria-label="Compile"><svg><use href="#comp"/></svg></button>
      <button class="ic" aria-label="Compile out of date"><svg><use href="#calq"/></svg></button>
      <button class="ic" aria-label="Compile all"><svg><use href="#cal"/></svg></button>
      <button class="ic" aria-label="Simulate"><svg><use href="#sim"/></svg></button>
      <button class="ic" aria-label="Break"><svg><use href="#runx"/></svg></button>
    </div>
    <div class="tb c6">
      <label class="lb mid" for="help">Help</label>
      <input class="field grow" id="help">
      <button class="ic tail" aria-label="Search help"><svg><use href="#helpf"/></svg></button>
    </div>
  </div>
  <div class="row row3">
    <div class="tb c2">
      <button class="bt on" aria-label="Inputs"><svg><use href="#fi"/></svg></button>
      <button class="bt on" aria-label="Outputs"><svg><use href="#fo"/></svg></button>
      <button class="bt on" aria-label="Inouts"><svg><use href="#fio"/></svg></button>
      <button class="bt on" aria-label="Internals"><svg><use href="#fint"/></svg></button>
      <button class="bt" aria-label="All"><svg><use href="#fall"/></svg></button>
      <button class="ic" aria-label="Filter"><svg><use href="#wand"/></svg></button>
    </div>
    <div class="tb c4">
      <button class="ic" aria-label="Step into"><svg><use href="#into"/></svg></button>
      <button class="ic" aria-label="Step over"><svg><use href="#over"/></svg></button>
      <button class="ic" aria-label="Step out"><svg><use href="#out"/></svg></button><i class="sep"></i>
      <button class="ic" aria-label="Step into current"><svg><use href="#intoc"/></svg></button><button class="dd" aria-label="Step into menu"></button>
      <button class="ic" aria-label="Step over current"><svg><use href="#overc"/></svg></button><button class="dd" aria-label="Step over menu"></button>
      <button class="ic" aria-label="Step out current"><svg><use href="#outc"/></svg></button>
    </div>
    <div class="tb c6">
      <button class="ic" aria-label="Add bookmark"><svg><use href="#bkadd"/></svg></button><button class="dd" aria-label="Add bookmark menu"></button>
      <button class="ic" aria-label="Delete bookmark"><svg><use href="#bkdel"/></svg></button><button class="dd" aria-label="Delete bookmark menu"></button>
      <button class="ic" aria-label="Manage bookmarks"><svg><use href="#bkedit"/></svg></button>
      <button class="ic" aria-label="Save bookmarks"><svg><use href="#bksave"/></svg></button><button class="dd" aria-label="Save bookmarks menu"></button>
      <button class="ic" aria-label="Go to bookmark"><svg><use href="#bkgo"/></svg></button>
    </div>
    <div class="tb c8">
      <label class="lb wide-gap" for="layout">Layout</label>
      <input class="field flat grow" id="layout" value="Simulate">
      <button class="drop" aria-label="Open layouts"></button>
    </div>
  </div>
  <div class="row row4">
    <div class="tb c2">
      <button class="bt on" aria-label="Select mode"><svg><use href="#arrow"/></svg></button>
      <button class="bt" aria-label="Zoom mode"><svg><use href="#zoomm"/></svg></button>
      <button class="bt" aria-label="Pan mode"><svg><use href="#pan"/></svg></button>
      <button class="bt" aria-label="Two cursor mode"><svg><use href="#curs2"/></svg></button>
      <button class="bt" aria-label="Edit mode"><svg><use href="#edge"/></svg></button><i class="sep"></i>
      <button class="ic" aria-label="Stop drawing"><svg><use href="#light"/></svg></button>
    </div>
    <div class="tb c4">
      <button class="ic" aria-label="Zoom in"><svg><use href="#zin"/></svg></button>
      <button class="ic" aria-label="Zoom out"><svg><use href="#zout"/></svg></button>
      <button class="ic" aria-label="Zoom full"><svg><use href="#zfull"/></svg></button>
      <button class="ic" aria-label="Zoom on cursor"><svg><use href="#zcur"/></svg></button>
      <button class="ic" aria-label="Zoom between cursors"><svg><use href="#zcur2"/></svg></button>
      <button class="ic" aria-label="Zoom selection"><svg><use href="#zsel"/></svg></button>
    </div>
    <div class="tb c6">
      <button class="bt on" aria-label="Event mode"><svg><use href="#w1"/></svg></button>
      <button class="bt" aria-label="Delta mode"><svg><use href="#w2"/></svg></button>
      <button class="bt" aria-label="Expanded mode"><svg><use href="#w3"/></svg></button><i class="sep"></i>
      <button class="ic" aria-label="Expand all"><svg><use href="#w4"/></svg></button>
      <button class="ic" aria-label="Expand at cursor"><svg><use href="#w5"/></svg></button>
      <button class="ic" aria-label="Collapse all"><svg><use href="#w6"/></svg></button>
      <button class="ic" aria-label="Collapse at cursor"><svg><use href="#w7"/></svg></button>
    </div>
    <div class="tb c8 searchbar">
      <button class="ic" aria-label="Drivers"><svg><use href="#brl"/></svg></button><button class="dd" aria-label="Drivers menu"></button>
      <button class="ic" aria-label="Readers"><svg><use href="#brr"/></svg></button><button class="dd" aria-label="Readers menu"></button>
      <button class="ic" aria-label="Connectivity"><svg><use href="#net"/></svg></button><i class="sep"></i>
      <label class="lb mid wide-gap" for="search">Search:</label>
      <input class="field grow" id="search">
      <button class="drop" aria-label="Search history"></button>
      <button class="ic" aria-label="Search previous"><svg><use href="#sprev"/></svg></button>
      <button class="ic" aria-label="Search next"><svg><use href="#snext"/></svg></button>
      <button class="ic" aria-label="Search options"><svg><use href="#sopt"/></svg></button>
    </div>
  </div>
  <div class="row row5">
    <div class="tb c2">
      <button class="ic" aria-label="Insert cursor"><svg><use href="#cadd"/></svg></button>
      <button class="ic" aria-label="Delete cursor"><svg><use href="#cdel"/></svg></button>
      <button class="ic" aria-label="Previous transition"><svg><use href="#e1"/></svg></button>
      <button class="ic" aria-label="Next transition"><svg><use href="#e2"/></svg></button>
      <button class="ic" aria-label="Previous falling edge"><svg><use href="#e3"/></svg></button>
      <button class="ic" aria-label="Next falling edge"><svg><use href="#e4"/></svg></button>
      <button class="ic" aria-label="Previous rising edge"><svg><use href="#e5"/></svg></button>
      <button class="ic" aria-label="Next rising edge"><svg><use href="#e6"/></svg></button>
    </div>
    <div class="tb c4">
      <button class="bt on" aria-label="Processes off"><svg><use href="#g1"/></svg></button>
      <button class="bt" aria-label="Processes in region"><svg><use href="#g2"/></svg></button>
      <button class="bt" aria-label="Active processes"><svg><use href="#g3"/></svg></button>
      <button class="bt" aria-label="Process hierarchy"><svg><use href="#g4"/></svg></button>
    </div>
  </div>
</section>

<main class="pane">
  <div class="panehead">
    <svg class="pi" viewBox="0 0 24 24" preserveAspectRatio="none"><use href="#wavei"/></svg>
    <h2>Wave - Default</h2>
    <span class="grip first"></span><span class="knurl"></span><span class="grip last"></span>
    <button class="pb" aria-label="Minimize pane"><svg viewBox="0 0 16 16"><path d="M2 8h12" stroke="#000" stroke-width="3"/></svg></button>
    <button class="pb" aria-label="Undock pane"><svg viewBox="0 0 16 16"><path d="M2 7h7v7H2z" fill="none" stroke="#000" stroke-width="2"/><path d="m6 10 7-7M8 2h6v6" fill="none" stroke="#000" stroke-width="2"/></svg></button>
    <button class="pb" aria-label="Close pane"><svg viewBox="0 0 16 16"><path d="m2 2 12 12M14 2 2 14" stroke="#000" stroke-width="2.500"/></svg></button>
  </div>
  <div class="wave">
    <div class="cell gray h-name"><svg><use href="#objs"/></svg><button class="dd" aria-label="Signal menu"></button></div>
    <div class="cell gray h-msgs">Msgs</div>
    <div class="cell black"><svg class="plot" id="plot-head"></svg></div>
    <div class="cell gray"></div>

    <div class="cell gray names"><ul class="list" id="names"></ul><div class="endline"></div></div>
    <div class="cell gray msgs"><ul class="list" id="msgs"></ul><div class="endline"></div></div>
    <div class="cell black"><svg class="plot" id="plot" role="img" aria-label="Waveforms"></svg></div>
    <div class="cell vbar"><button class="sb up" aria-label="Scroll up"></button><div class="vthumb"><i></i></div><button class="sb down" aria-label="Scroll down"></button></div>

    <div class="cell gray cursors">
      <div class="crow now"><svg><use href="#camera"/></svg><svg><use href="#note"/></svg><svg><use href="#plus"/></svg><span>Now</span></div>
      <div class="crow"><svg><use href="#lock"/></svg><svg><use href="#wrench"/></svg><svg><use href="#minus"/></svg><span class="sel">Cursor 1</span></div>
    </div>
    <div class="cell gray cursors">
      <div class="crow now"><span>800 ns</span></div>
      <div class="crow"><span class="sel">386 ns</span></div>
    </div>
    <div class="cell black"><svg class="plot" id="ruler" role="img" aria-label="Time axis"></svg></div>
    <div class="cell gray"></div>

    <div class="cell hbar inset"><button class="sb lt dis" aria-label="Scroll names left"></button><i class="track"></i><button class="sb rt dis" aria-label="Scroll names right"></button></div>
    <div class="cell hbar"><button class="sb lt dis" aria-label="Scroll values left"></button><i class="track"></i><button class="sb rt dis" aria-label="Scroll values right"></button></div>
    <div class="cell hbar wide"><button class="sb lt" aria-label="Scroll left"></button><div class="trough"><i class="hthumb"></i></div><button class="sb rt" aria-label="Scroll right"></button></div>
    <div class="cell gray"></div>
  </div>
</main>

<nav class="tabs">
  <button class="tab t1"><svg><use href="#trans"/></svg><span>Transcript</span><b>×</b></button>
  <button class="tab t2 active"><svg><use href="#wavei"/></svg><span>Wave</span><b>×</b></button>
  <button class="tab t3"><svg><use href="#mlogo"/></svg><span>InstMem.v</span><b>×</b></button>
  <button class="tab t4"><svg><use href="#objs"/></svg><span>Objects</span><b>×</b></button>
  <button class="tab t5"><svg><use href="#gear"/></svg><span>Processes</span><b>×</b></button>
  <button class="tab t6"><svg><use href="#lib"/></svg><span>Library</span><b>×</b></button>
  <button class="tab t7"><svg><use href="#cal"/></svg><span>Project</span><b>×</b></button>
  <button class="tab t8"><svg><use href="#sim"/></svg><span>sim</span><b>×</b></button>
  <button class="tab t9"><svg><use href="#mem"/></svg><span>Memory List</span><b>×</b></button>
  <i class="fill"></i>
  <button class="ts" aria-label="Previous tab">«</button><button class="ts" aria-label="Next tab">»</button>
</nav>
<footer class="status">
  <span>80 ns to 390 ns</span><span>Project : MIPS</span><span>Now: 800 ns&nbsp; Delta: 2</span><span>/soc_tb/soc0/mips0/regfile0/reg32[9]</span>
</footer>

<aside class="ime">
  <svg class="slogo" viewBox="0 0 46 46"><path d="M6 6 34 0q5-1 6 4l6 31q0 5-4 6l-28 5q-5 0-6-5L0 12q0-5 6-6z" fill="#f4591f"/><path d="M34 11c-9-4-21-1-21 5 0 7 20 5 21 12 0 7-13 9-22 5" fill="none" stroke="#fff" stroke-width="7"/></svg>
  <span class="zh">中</span>
  <svg viewBox="0 0 24 24"><circle cx="6" cy="7" r="3" fill="none" stroke="#0b6fd8" stroke-width="2"/><path d="M15 13h5v4c0 3-2 4-4 5v-2l1-2h-2z" fill="#0b6fd8"/></svg>
  <svg viewBox="0 0 24 24"><rect x="8" y="1" width="8" height="13" rx="4" fill="#0b6fd8"/><path d="M4 11c0 10 16 10 16 0M12 18v5M8 23h8" fill="none" stroke="#0b6fd8" stroke-width="2.500"/></svg>
  <svg viewBox="0 0 24 24"><rect x="1" y="4" width="22" height="17" rx="2" fill="#0b6fd8"/><path d="M4 9h16M4 13h16M7 17h10" stroke="#fff" stroke-width="2" stroke-dasharray="2.500 1.500"/></svg>
  <svg viewBox="0 0 24 24"><path d="m1 6 6-4c2 4 8 4 10 0l6 4-2 6h-3v11H6V12H3z" fill="#0b6fd8"/></svg>
  <svg viewBox="0 0 24 24"><path d="M3 3h6v6H3zM15 15h6v6h-6zM3 15h6v6H3z" fill="#0b6fd8" stroke="#0b6fd8" stroke-linejoin="round" stroke-width="3"/><circle cx="18" cy="6" r="4" fill="none" stroke="#0b6fd8" stroke-width="3"/></svg>
  <span class="mark">CSDN @日星月云</span>
</aside>
<script src="app.js"></script>
</body>
</html>
```
FILE: styles.css
```css
* { box-sizing: border-box; }
html, body { margin: 0; }
body {
  display: flex; flex-direction: column; min-height: 100vh; position: relative;
  background: #efefef; color: #111; overflow-x: hidden;
  font: 16px/20px "DejaVu Sans Condensed", "Noto Sans", sans-serif;
  border-bottom: 2px solid #cfe6c0;
}
button, input { font: inherit; color: inherit; padding: 0; margin: 0; border: 0; background: none; border-radius: 0; }
.defs { position: absolute; width: 0; height: 0; }
ul { list-style: none; margin: 0; padding: 0; }
h1, h2 { margin: 0; font-weight: 400; }

.titlebar { display: flex; align-items: center; height: 35px; background: #fff; padding: 0 1px 2px 3px; }
.applogo { width: 22px; height: 22px; margin-right: 6px; }
h1 { font: 19px/24px "Open Sans", "Noto Sans", sans-serif; color: #000; }
.winctl { margin-left: auto; display: flex; }
.winctl button { width: 70px; height: 32px; display: grid; place-items: center; }
.winctl svg { width: 16px; height: 16px; }
.menubar { display: flex; gap: 20px; height: 30px; background: #fff; padding-left: 10px; font: 19px/28px "Open Sans", "Noto Sans", sans-serif; border-bottom: 1px solid #ddd; }
.menubar button { color: #222; height: 28px; }
.menubar u { text-decoration-thickness: 1px; text-underline-offset: 3px; }

.toolbars { border-top: 2px solid #aaa; border-left: 2px solid #fff; display: grid; grid-auto-rows: 47px; row-gap: 1px; padding-bottom: 1px; }
.row { display: grid; }
.row1 { grid-template-columns: 61px 514px 2px 163px 10px 675px 1fr; }
.row2 { grid-template-columns: 0 498px 1fr 190px 29px 223px 32px; }
.row3 { grid-template-columns: 0 252px 3px 265px 3px 231px 1px 310px 1fr; }
.row4 { grid-template-columns: 0 268px 113px 222px 117px 290px 74px 548px 1fr; }
.row5 { grid-template-columns: 0 288px 1160px 181px 1fr; }
.c2 { grid-column: 2; } .c4 { grid-column: 4; } .c6 { grid-column: 6; } .c8 { grid-column: 8; }
.tb {
  display: flex; align-items: flex-start; padding: 5px 0 0 9px; min-width: 0;
  border: solid; border-width: 1px 2px 2px 1px; border-color: #fff #808080 #808080 #efefef;
}
.tb::before { content: ""; flex: none; width: 7px; height: 40px; margin: -4px 6px 0 -6px; background: linear-gradient(#808080, #808080) 4px 0 / 2px 40px no-repeat, linear-gradient(#808080, #808080) 0 38px / 5px 2px no-repeat, linear-gradient(#fff, #fff) 1px 0 / 3px 40px no-repeat; }
.searchbar { padding-right: 9px; }
.ic { flex: none; width: 33px; height: 30px; display: grid; place-items: center; }
.ic svg, .bt svg { width: 24px; height: 24px; }
.bt { flex: none; width: 30px; height: 30px; margin: 4px 4px 0 5px; display: grid; place-items: center; border: solid; border-width: 1px 2px 2px 1px; border-color: #fff #777 #777 #fff; }
.bt.on { background: #fff; border-color: #808080 #eee #eee #808080; }
.dd { flex: none; width: 14px; height: 32px; display: grid; place-items: center; }
.dd::before { content: ""; border: solid transparent; border-width: 5px 4px 0; border-top-color: #000; }
.sep { flex: none; width: 16px; height: 24px; margin-top: 4px; background: repeating-linear-gradient(#333 0 1px, transparent 1px 3px) 8px 0 / 1px 24px no-repeat; }
.field { height: 28px; margin-top: 3px; padding: 0 2px; background: #fff; border: 1px solid; border-color: #808080 #fff #fff #808080; border-top-width: 2px; min-width: 0; font: 17px/24px "Liberation Mono", monospace; color: #222; }
.field.flat { background: #efefef; }
.grow { flex: 1; }
.runlen { width: 92px; text-align: right; margin-left: 5px; }
.spin { display: grid; width: 20px; height: 28px; margin: 2px 7px 0 2px; }
.spin button { display: grid; place-items: center; border: solid; border-width: 1px 2px 2px 1px; border-color: #fff #808080 #808080 #fff; }
.spin button::before { content: ""; border: solid transparent; border-width: 0 5px 8px; border-bottom-color: #000; }
.spin button + button::before { border-width: 8px 5px 0; border-top-color: #000; }
.lb { padding: 3px 6px 0 7px; color: #111; }
.lb.mid { padding-top: 6px; }
.lb.wide-gap { padding-right: 10px; }
.lb.off, .field.off { color: #808080; }
.drop { flex: none; width: 26px; height: 26px; margin: 3px 4px 0; display: grid; place-items: center; border: solid; border-width: 1px 2px 2px 1px; border-color: #fff #777 #777 #fff; }
.row2 .drop, .row3 .drop { margin-right: 12px; }
.drop::before { content: ""; border: solid transparent; border-width: 10px 10px 0; border-top-color: #000; }
.drop.dim::before { border-top-color: #666; border-width: 9px 8px 0; }
.tail { margin: 0 5px 0 8px; }

.pane { flex: 1; display: flex; flex-direction: column; margin-top: 1px; padding: 1px 3px 3px 3px; border: 2px solid #b4b4b4; border-right-width: 1px; background: #fff; }
.panehead { display: flex; align-items: center; height: 28px; background: #99b4d1; padding: 0 2px 0 1px; }
.pi { width: 21px; height: 23px; }
h2 { font: inherit; margin: 0 12px 0 6px; color: #222; }
.grip { height: 13px; background: linear-gradient(#cdf0ff 0 2px, #99b4d1 2px 3px, #111 3px 5px, #99b4d1 5px 8px, #cdf0ff 8px 10px, #222 11px 13px); }
.grip.first { flex: 486; }
.grip.last { flex: 484; border-right: 1px solid #111; }
.knurl { width: 30px; margin: 0 2px; height: 13px; background: radial-gradient(circle at 1px 1px, #222 1px, transparent 2px) 1px 1px / 5px 5px, radial-gradient(circle at 1px 1px, #e4f6ff 1px, transparent 2px) 3px 1px / 5px 5px; }
.pb { width: 20px; height: 20px; margin-left: 5px; display: grid; place-items: center; background: #f4f4f4; border: solid; border-width: 1px 2px 2px 1px; border-color: #fff #777 #777 #fff; }
.pb svg { width: 15px; height: 15px; }

.wave { flex: 1; display: grid; gap: 5px 4px; margin-top: 2px; background: #fff; grid-template-columns: 384px 151px minmax(0, 1fr) 27px; grid-template-rows: 27px minmax(440px, 1fr) 58px 28px; }
.cell { min-width: 0; outline: 1px solid #a8a8a8; }
.gray { background: #808080; color: #fff; }
.black { background: #000; }
.plot { display: block; width: 100%; height: 100%; overflow: hidden; }
.h-name { display: flex; align-items: center; padding-left: 15px; }
.h-name svg { width: 25px; height: 24px; }
.h-name .dd { width: 20px; height: 12px; margin-top: 8px; }
.h-msgs { text-align: right; padding: 6px 9px 0 0; }
.names { border-left: 13px solid #fff; }
.names, .msgs { padding-top: 2px; }
.list { display: grid; grid-template-rows: repeat(16, 1fr); height: 408px; }
.list li { display: flex; align-items: center; min-width: 0; white-space: nowrap; padding-top: 1px; }
#names li { padding-left: 8px; }
#msgs li { padding-left: 3px; }
.list li.sel { background: #fff; color: #111; }
.exp { width: 15px; height: 15px; display: grid; place-items: center; background: linear-gradient(135deg, #fff 50%, #b8c4e0); border: 1px solid #bcc6dc; border-radius: 2px; }
.exp svg { width: 9px; height: 9px; }
.stem { width: 7px; height: 1px; background: #ccc; }
.none { width: 22px; }
.gem { width: 23px; height: 23px; margin-right: 7px; }
.endline { height: 2px; background: #111; margin: 1px 6px 0 2px; }
.names .endline { margin-left: 4px; position: relative; }
.names .endline::before { content: ""; position: absolute; left: 0; top: -4px; border: solid transparent; border-width: 5px 0 5px 5px; border-left-color: #111; }

.cursors { display: flex; flex-direction: column; }
.crow { display: flex; align-items: center; height: 26px; padding-left: 13px; }
.crow.now { height: 32px; }
.crow svg { width: 18px; height: 18px; margin-right: 2px; }
.crow span { flex: 1; height: 100%; text-align: right; padding: 7px 15px 0 0; }
.crow.now + .crow span { padding-top: 4px; }
.cursors:not(:has(svg)) .crow { padding-left: 0; }
.crow .sel { background: #fff; color: #111; }

.hbar { display: flex; background: #f7f7f7; }
.hbar.inset { border-left: 13px solid #808080; }
.track, .trough { flex: 1; }
.wide { background: #efefef; border-top: 2px solid #888; border-bottom: 1px solid #fff; }
.wide .sb { margin: 1px; }
.wide .rt { margin-right: 3px; }
.trough { background: #c8c8c8; display: flex; }
.hthumb { width: 487px; margin-left: 125px; background: linear-gradient(#f2d060, #f2d060) right 2px top / 2px 100% no-repeat #efefef; border: solid; border-width: 1px 2px 2px 1px; border-color: #fff #888 #888 #fff; }
.sb { flex: none; width: 24px; background: #efefef; display: grid; place-items: center; border: solid; border-width: 1px 3px 3px 1px; border-color: #fff #8a8a8a #8a8a8a #fff; }
.sb::before { content: ""; border: 5px solid transparent; }
.lt::before { border-width: 6px 7px 6px 0; border-right-color: #000; }
.rt::before { border-width: 6px 0 6px 7px; border-left-color: #000; }
.lt.dis::before { border-right-color: #999; }
.rt.dis::before { border-left-color: #999; }
.vbar { display: flex; flex-direction: column; background: #efefef; padding: 1px 2px 1px 1px; }
.vbar .sb { height: 24px; }
.up::before { border-width: 0 6px 6px; border-bottom-color: #000; }
.down::before { border-width: 6px 6px 0; border-top-color: #000; }
.vthumb { flex: 1; width: 22px; border: solid; border-width: 2px 3px 2px 1px; border-color: #fff #999 #888 #fff; display: flex; align-items: flex-end; padding-bottom: 111px; }
.vthumb i { flex: 1; height: 23px; background: #fff; }

.tabs { display: flex; align-items: flex-start; height: 36px; margin-top: 2px; border-top: 2px solid #222; padding-left: 2px; }
.tab { display: flex; align-items: center; height: 30px; background: #c8c8c8; border: solid #222; border-width: 0 1px 2px; border-radius: 0 0 5px 5px; padding-left: 6px; gap: 6px; color: #222; white-space: nowrap; }
.tab.active { background: #efefef; }
.tab svg { width: 22px; height: 22px; flex: none; }
.tab b { margin-left: auto; margin-right: 5px; font: bold 20px/20px "DejaVu Sans", sans-serif; color: #aaa; }
.t1 { width: 136px; } .t2 { width: 108px; } .t3 { width: 142px; } .t4 { width: 121px; } .t5 { width: 139px; }
.t6 { width: 115px; } .t7 { width: 117px; } .t8 { width: 89px; } .t9 { width: 151px; }
.fill { flex: 1; }
.ts { width: 16px; height: 24px; font-size: 18px; border: solid; border-width: 1px 2px 2px 1px; border-color: #fff #888 #888 #fff; }

.status { display: grid; grid-template-columns: 253px 110px 296px 1fr; column-gap: 8px; height: 28px; margin-bottom: 2px; padding-left: 5px; }
.status span { border: 1px solid; border-color: #a0a0a0 #fff #fff #a0a0a0; border-top-width: 2px; padding: 4px 0 0 3px; white-space: nowrap; color: #222; }
.status span:first-child { padding-left: 8px; }

.ime { position: absolute; right: 2px; bottom: 0; width: 226px; height: 37px; display: flex; align-items: center; justify-content: space-between; padding: 0 6px 0 15px; background: #fff; border: 1px solid #b8cce8; }
.ime svg { width: 24px; height: 24px; }
.ime .slogo { position: absolute; left: -40px; bottom: -2px; width: 46px; height: 46px; }
.zh { font: bold 22px/24px "Noto Sans CJK SC", sans-serif; color: #0b6fd8; }
.mark { position: absolute; right: 12px; top: 7px; font: 18px/24px "Noto Sans", "Noto Sans CJK SC", sans-serif; color: #444; white-space: nowrap; text-shadow: 1px 1px 0 #fff; }

.g { stroke: #6c6c6c; stroke-width: 2; }
.sig { fill: none; stroke: #2fd60a; stroke-width: 2; }
.bus { fill: none; stroke: #8fd08f; stroke-width: 2; }
.unk { fill: none; stroke: #d00000; stroke-width: 2; }
.cur { stroke: #ffd200; stroke-width: 5; }
.val { fill: #fff; font-size: 16px; }
.tick { stroke: #20c810; stroke-width: 2; }
.tl { fill: #20e010; font-size: 16px; text-anchor: middle; }
.axis { stroke: #808080; stroke-width: 2; }
.flag { fill: #000; stroke: #f0c800; stroke-width: 2; }
.ft { fill: #e8c000; font-size: 16px; }
```
FILE: app.js
```js
// Each signal: name, current value, and its changes as [time, value]; null is an unknown bus.
const reg = (n, t, v) => ({ name: `/soc_tb/soc0/mips0/regfile0/reg32[${n}]`, msg: "32'h" + v, bus: [[80, null], [t, v]] });
const signals = [
  { name: "/soc_tb/soc0/clk", msg: "1'h0", input: true, bit: [[80, 1], ...Array.from({ length: 31 }, (_, i) => [80 + i * 10, i % 2])] },
  { name: "/soc_tb/soc0/rst", msg: "1'h0", input: true, bit: [[80, 1], [100, 0]] },
  { name: "/soc_tb/soc0/instAddr", msg: "32'h00000034", bus: [[80, "00000000"], [110, "00000..."], [130, "00000..."], [150, "0000000c"], [170, "00000010"], [190, "00000..."], [210, "00000..."], [230, "0000001c"], [250, "00000..."], [270, "00000..."], [290, "00000028"], [330, "0000002c"], [350, "00000..."], [370, "00000034"]] },
  { name: "/soc_tb/soc0/instruction", msg: "32'hxxxxxxxx", bus: [[80, "00000..."], [100, "3..."], [110, "34020..."], [130, "3403ff00"], [150, "3404ffff"], [170, "34850000"], [190, "34860..."], [210, "34870..."], [230, "ac010000"], [250, "8c080000"], [270, "35090..."], [290, null]] },
  { name: "/soc_tb/soc0/romCe", msg: "1'h1", bit: [[80, 0], [100, 1]] },
  { name: "/soc_tb/soc0/memCe", msg: "1'h0", bit: [[80, 0], [290, 1], [330, 0]] },
  reg(9, 360, "00000000"), reg(8, 340, "00001100"), reg(7, 300, "0000ffff"), reg(6, 280, "0000ffff"),
  reg(5, 260, "0000ffff"), reg(4, 240, "0000ffff"), { ...reg(3, 220, "0000ff00"), sel: true },
  reg(2, 200, "00000020"), reg(1, 180, "00001100"),
  { name: "/soc_tb/soc0/datamem0/datamem[0]", msg: "32'h00001100", bus: [[80, null], [310, "00001100"]] }
];
const X = t => Math.round(90 + (t - 100) * 4.28);
const END = 1331;
const CURSOR = X(386);
const text = (x, y, cls, s) => `<text x="${x}" y="${y}" class="${cls}">${s}</text>`;
const path = (cls, d) => `<path class="${cls}" d="${d}"/>`;

document.getElementById("names").innerHTML = signals.map(s => {
  const lead = s.bus ? '<button class="exp" aria-label="Expand"><svg viewBox="0 0 9 9"><path d="M4.500 0v9M0 4.500h9" stroke="#000" stroke-width="2"/></svg></button><i class="stem"></i>' : '<i class="none"></i>';
  return `<li class="${s.sel ? "sel" : ""}">${lead}<svg class="gem"><use href="#${s.input ? "gemin" : "gem"}"/></svg>${s.name}</li>`;
}).join("");
document.getElementById("msgs").innerHTML = signals.map(s => `<li class="${s.sel ? "sel" : ""}">${s.msg}</li>`).join("");

let out = "";
for (let t = 100; t <= 380; t += 20) out += path("g", `M${X(t)} 0V2000`);
let labels = "";
signals.forEach((s, i) => {
  const hi = Math.round(6 + i * 25.5), lo = hi + 18, mid = hi + 9;
  if (s.bit) {
    let d = "";
    s.bit.forEach(([t, v], k) => { const y = v ? hi : lo; d += (k ? `H${X(t)}V${y}` : `M${X(t)} ${y}`); });
    out += path("sig", d + `H${END}`);
    return;
  }
  s.bus.forEach(([t, v], k) => {
    const a = X(t), last = k === s.bus.length - 1, b = last ? END : X(s.bus[k + 1][0]);
    if (v === null) { out += path("unk", `M${a} ${mid}H${b}`); return; }
    const tail = last ? `M${b} ${lo}` : `L${b} ${hi + 4}V${lo - 4}L${b - 1} ${lo}`;
    const head = k ? `M${a + 1} ${lo}L${a} ${lo - 4}V${hi + 4}L${a + 1} ${hi}` : `M${a} ${hi}`;
    out += path("bus", `${head}H${last ? b : b - 1}${tail}H${a + (k ? 1 : 0)}`);
    labels += text(a + 6, hi + 15, "val", v);
  });
});
document.getElementById("plot").innerHTML = out + path("cur", `M${CURSOR} 1V2000`) + labels;
document.getElementById("plot-head").innerHTML = path("cur", `M${CURSOR} 2V27`);

let r = path("axis", `M4 33H${END}`);
for (let t = 85; t <= 385; t += 5) r += path("tick", `M${X(t)} ${t % 25 ? 5 : 0}V10`);
for (let t = 100; t <= 350; t += 50) r += text(X(t), 30, "tl", t + " ns");
r += path("cur", `M${CURSOR} 0V33`) + path("flag", `M${END} 35H1279V57H${END}`) + text(1281, 53, "ft", "386 ns");
document.getElementById("ruler").innerHTML = r;
```
